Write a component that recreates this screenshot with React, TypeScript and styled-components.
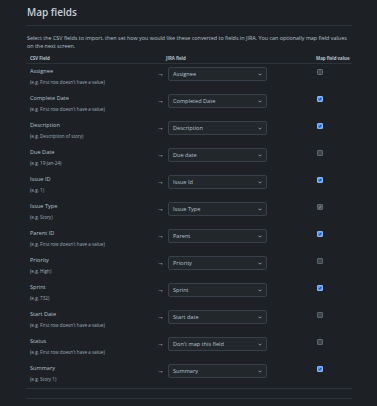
import React from "react";
import styled, { createGlobalStyle } from "styled-components";

const Global = createGlobalStyle`
  html, body { margin: 0; padding: 0; background: #1d2125; }
  body { font-family: "Open Sans", "Noto Sans", sans-serif; color: #b6c2cf; }
`;

const Page = styled.div`
  width: 326px;
  padding: 0 25px 0 26px;
`;

const Title = styled.h2`
  margin: 0;
  padding: 5px 0 6px 1px;
  line-height: 14px;
  font-size: 10px;
  font-weight: 600;
  color: #c7d1db;
  border-bottom: 1px solid #2c333a;
`;

const Intro = styled.p`
  margin: 8px 0 0 1px;
  font-size: 5.4px;
  line-height: 8px;
  color: #b6c2cf;
`;

const Table = styled.div`
  margin-top: 4px;
  display: grid;
  grid-template-columns: 127px 13px 150px 1fr;
`;

const HeadCell = styled.div<{ $pl?: number }>`
  font-size: 4.4px;
  font-weight: 700;
  line-height: 9px;
  color: #b6c2cf;
  padding-left: ${(p) => p.$pl ?? 0}px;
  border-bottom: 1px solid #2c333a;
`;

const Row = styled.div`
  display: contents;
`;

const FieldCell = styled.div`
  height: 27px;
  padding-left: 4px;
`;

const Label = styled.div`
  margin-top: 3px;
  font-size: 5.6px;
  line-height: 8px;
  color: #b6c2cf;
`;

const Hint = styled.div`
  margin-top: 3px;
  font-size: 4.6px;
  line-height: 8px;
  color: #9fadbc;
`;

const Arrow = styled.div`
  margin-top: 3px;
  padding-left: 4px;
  height: 13px;
  display: flex;
  align-items: center;
  line-height: 1;
  font-size: 7px;
  color: #b6c2cf;
`;

const SelectBox = styled.div`
  margin: 3px 0 0 2px;
  width: 99px;
  height: 14px;
  box-sizing: border-box;
  border: 1px solid #38414a;
  border-radius: 2px;
  background: #22272b;
  display: flex;
  align-items: center;
  justify-content: space-between;
  padding: 0 4px 0 4px;
  font-size: 5.6px;
  color: #b6c2cf;
`;

const CheckCell = styled.div`
  padding: 5px 0 0 1px;
`;

const Box = styled.div<{ $state: "on" | "off" | "disabled" }>`
  width: 6px;
  height: 6px;
  box-sizing: border-box;
  border-radius: 1px;
  display: flex;
  align-items: center;
  justify-content: center;
  background: ${(p) =>
    p.$state === "on" ? "#579dff" : p.$state === "disabled" ? "#454f59" : "#3b444c"};
  border: 1px solid
    ${(p) => (p.$state === "on" ? "#85b8ff" : p.$state === "disabled" ? "#5b6670" : "#596773")};
`;

const Footer = styled.div`
  height: 9px;
  border-top: 1px solid #2c333a;
  border-bottom: 1px solid #2c333a;
`;

const Chevron = () => (
  <svg width="4" height="3" viewBox="0 0 4 3">
    <path d="M0.5 0.7 L2 2.2 L3.5 0.7" stroke="#9fadbc" strokeWidth="0.8" fill="none" />
  </svg>
);

const Tick = ({ color }: { color: string }) => (
  <svg width="4" height="4" viewBox="0 0 4 4">
    <path d="M0.6 2.2 L1.6 3.1 L3.4 0.9" stroke={color} strokeWidth="0.9" fill="none" />
  </svg>
);

type F = { name: string; hint: string; jira: string; state: "on" | "off" | "disabled" };

const fields: F[] = [
  { name: "Assignee", hint: "(e.g. First row doesn't have a value)", jira: "Assignee", state: "off" },
  { name: "Complete Date", hint: "(e.g. First row doesn't have a value)", jira: "Completed Date", state: "on" },
  { name: "Description", hint: "(e.g. Description of story)", jira: "Description", state: "on" },
  { name: "Due Date", hint: "(e.g. 19-Jan-24)", jira: "Due date", state: "off" },
  { name: "Issue ID", hint: "(e.g. 1)", jira: "Issue Id", state: "on" },
  { name: "Issue Type", hint: "(e.g. Story)", jira: "Issue Type", state: "disabled" },
  { name: "Parent ID", hint: "(e.g. First row doesn't have a value)", jira: "Parent", state: "on" },
  { name: "Priority", hint: "(e.g. High)", jira: "Priority", state: "off" },
  { name: "Sprint", hint: "(e.g. 732)", jira: "Sprint", state: "on" },
  { name: "Start Date", hint: "(e.g. First row doesn't have a value)", jira: "Start date", state: "off" },
  { name: "Status", hint: "(e.g. First row doesn't have a value)", jira: "Don't map this field", state: "off" },
  { name: "Summary", hint: "(e.g. Story 1)", jira: "Summary", state: "on" },
];

export default function App() {
  return (
    <Page>
      <Global />
      <Title>Map fields</Title>
      <Intro>
        Select the CSV fields to import, then set how you would like these converted to fields in JIRA. You can
        optionally map field values on the next screen.
      </Intro>
      <Table>
        <HeadCell $pl={4}>CSV Field</HeadCell>
        <HeadCell />
        <HeadCell>JIRA field</HeadCell>
        <HeadCell>Map field value</HeadCell>
        {fields.map((f) => (
          <Row key={f.name}>
            <FieldCell>
              <Label>{f.name}</Label>
              <Hint>{f.hint}</Hint>
            </FieldCell>
            <Arrow>→</Arrow>
            <div>
              <SelectBox>
                <span>{f.jira}</span>
                <Chevron />
              </SelectBox>
            </div>
            <CheckCell>
              <Box $state={f.state}>
                {f.state === "on" && <Tick color="#1d2125" />}
                {f.state === "disabled" && <Tick color="#8c9bab" />}
              </Box>
            </CheckCell>
          </Row>
        ))}
      </Table>
      <Footer />
    </Page>
  );
}
